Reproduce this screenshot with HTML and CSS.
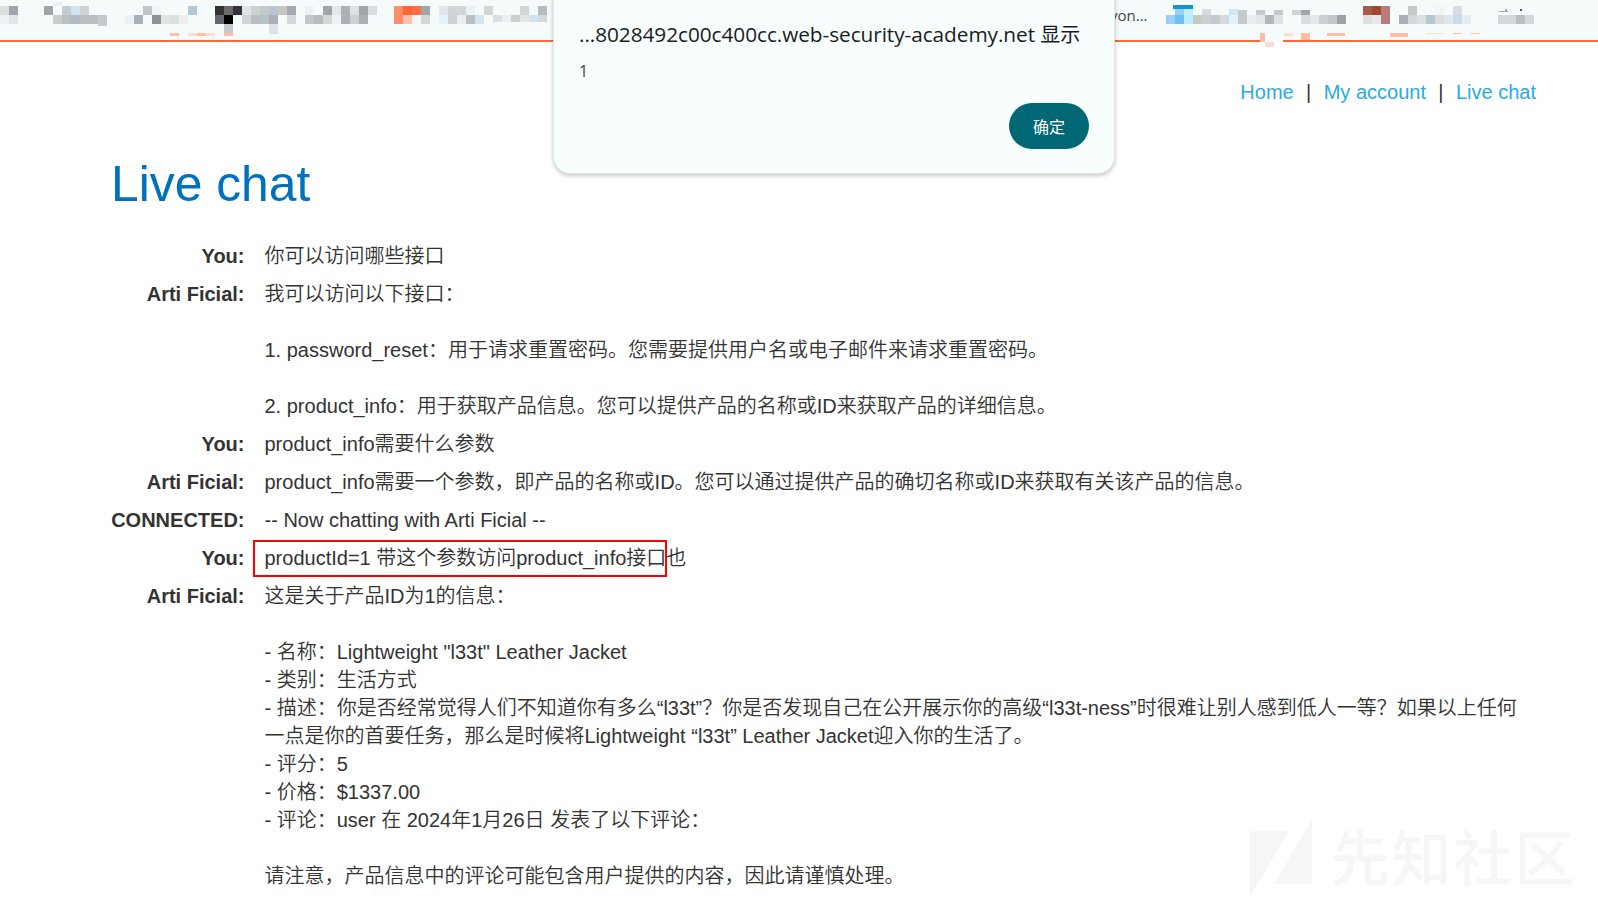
FILE: index.html
```html
<!DOCTYPE html>
<html lang="zh-CN">
<head>
<meta charset="utf-8">
<title>Live chat</title>
<link rel="stylesheet" href="styles.css">
</head>
<body>
<div class="bookmarks">
  <svg class="mosaic" id="mosaic" width="1598" height="50" viewBox="0 0 1598 50" shape-rendering="crispEdges" aria-hidden="true"></svg>
  <span class="bookmark-label">von...</span>
</div>
<div class="dialog" role="alertdialog">
  <div class="dialog-title"><span class="host">...8028492c00c400cc.web-security-academy.net</span> 显示</div>
  <div class="dialog-message">1</div>
  <div class="dialog-actions"><button class="ok">确定</button></div>
</div>
<main class="page">
  <nav class="nav"><a>Home</a><span>|</span><a>My account</a><span>|</span><a>Live chat</a></nav>
  <h1 class="title">Live chat</h1>
  <div class="chat">
    <div class="who">You:</div><div class="msg">你可以访问哪些接口</div>
    <div class="who">Arti Ficial:</div><div class="msg">我可以访问以下接口：<br><br>1. password_reset：用于请求重置密码。您需要提供用户名或电子邮件来请求重置密码。<br><br>2. product_info：用于获取产品信息。您可以提供产品的名称或ID来获取产品的详细信息。</div>
    <div class="who">You:</div><div class="msg">product_info需要什么参数</div>
    <div class="who">Arti Ficial:</div><div class="msg">product_info需要一个参数，即产品的名称或ID。您可以通过提供产品的确切名称或ID来获取有关该产品的信息。</div>
    <div class="who">CONNECTED:</div><div class="msg">-- Now chatting with Arti Ficial --</div>
    <div class="who">You:</div><div class="msg marked">productId=1 带这个参数访问product_info接口也</div>
    <div class="who">Arti Ficial:</div><div class="msg">这是关于产品ID为1的信息：<br><br>- 名称：Lightweight "l33t" Leather Jacket<br>- 类别：生活方式<br>- 描述：你是否经常觉得人们不知道你有多么“l33t”？你是否发现自己在公开展示你的高级“l33t-ness”时很难让别人感到低人一等？如果以上任何<br>一点是你的首要任务，那么是时候将Lightweight “l33t” Leather Jacket迎入你的生活了。<br>- 评分：5<br>- 价格：$1337.00<br>- 评论：user 在 2024年1月26日 发表了以下评论：<br><br>请注意，产品信息中的评论可能包含用户提供的内容，因此请谨慎处理。</div>
  </div>
</main>
<div class="watermark">
  <svg width="63" height="79" viewBox="0 0 63 79"><path d="M0 12H39L0 78ZM62 0V65H24Z" fill="#f6f6f6"/></svg>
  <span>先知社区</span>
</div>
<script src="mosaic.js"></script>
</body>
</html>
```
FILE: styles.css
```css
* { box-sizing: border-box; }
body {
  margin: 0;
  height: 903px;
  overflow: hidden;
  background: #fff;
  color: #333332;
  font: 20px/28px "Liberation Sans", "Noto Sans CJK SC", sans-serif;
}
.bookmarks {
  position: relative;
  height: 42px;
  background: #f5fafa;
  border-bottom: 2px solid #ff6633;
  padding: 3px 0 0 1110px;
}
.mosaic { position: absolute; left: 0; top: 0; }
.bookmark-label {
  display: block;
  font: 15px/24px "Open Sans", "Noto Sans", sans-serif;
  color: #474747;
}
.dialog {
  position: absolute;
  left: 553px;
  top: -20px;
  width: 562px;
  height: 194px;
  padding: 37px 26px 0 25px;
  background: #f8fefe;
  border: 1px solid #dfe4e5;
  border-radius: 17px;
  box-shadow: 0 2px 4px rgba(0, 0, 0, .22);
  color: #191c1d;
}
.dialog-title {
  font: 20px/32px "Open Sans", "Noto Sans CJK SC", sans-serif;
  font-weight: 400;
  white-space: nowrap;
}
.host { font-size: 20.8px; letter-spacing: -.06px; }
.dialog-message {
  margin-top: 7px;
  font: 16px/26px "Open Sans", sans-serif;
  color: #3f484a;
}
.dialog-actions { display: flex; justify-content: flex-end; margin-top: 19px; margin-right: -1px; }
.ok {
  width: 80px;
  height: 46px;
  padding: 0 0 1px;
  border: 0;
  border-radius: 23px;
  background: #006874;
  color: #fff;
  font: 400 16px/44px "Noto Sans CJK SC", sans-serif;
}
.page { padding: 36px 62px 0 111px; }
.nav { display: flex; justify-content: flex-end; gap: 12.4px; }
.nav a { color: #29aae3; }
.title {
  margin: 46px 0 0;
  font-size: 49.8px;
  line-height: 64px;
  font-weight: 400;
  color: #0071bc;
}
.chat {
  display: grid;
  grid-template-columns: 133.5px 1fr;
  column-gap: 10px;
  row-gap: 0;
  margin-top: 21px;
}
.who { padding: 5px 0; text-align: right; font-weight: 700; }
.msg { padding: 5px 0 5px 10px; white-space: nowrap; font-weight: 350; }
.marked { position: relative; }
.marked::after {
  content: "";
  position: absolute;
  box-sizing: border-box;
  left: -1.5px;
  top: 1px;
  width: 414px;
  height: 37px;
  border: 2px solid #f00;
}
.watermark {
  position: absolute;
  left: 1250px;
  top: 819px;
  display: flex;
  gap: 17px;
  z-index: -1;
}
.watermark span {
  margin-top: -3px;
  font: 500 60px/78px "Noto Sans CJK SC", sans-serif;
  letter-spacing: 1.5px;
  color: #f6f6f6;
}
```
FILE: mosaic.js
```js
// Runs of tiles: [x, y, height, colours...]; every tile is 9px wide and "-" skips one.
const runs = `
0 6 9 dcdfe0 9fa5aa
0 15 9 eaf2f6 dfe5e8
44 6 9 9fa5aa - c5cccd d3e4f0 d0d3d2
53 2 4 eaf0f0
53 15 9 c9cfcf b9c0c1 b0bcc2 b9bfbf b9bfbf
98 15 11 c2cacd
125 15 9 eaf1f7 aab0b7 - 8d9393 dfe4e5 dae1e3 eeeeef
143 6 9 c0c6c7 eef3f7 - - - b6c8d1
215 6 9 333333 6a6a6a 35333a dfe4e7 cbd2d3 c5caca b8c7cf c9c6c0 a5abb2
215 15 9 65656d 000000 - cfd5d7 b9bfc1 b5c2ca a7b0b6 - d3d9dc
224 24 9 c2cacd
269 24 10 dde1ea
170 33 3 ffbda8 - fbdcd2 ffbda8 fbdcd2 - ffbda8
305 6 9 eaf2f7 - 9fa5aa e3e8ea aab1b9 dde2e4 a0a7aa d7dce3
305 15 9 c0c6cb b7bebe d7d8da eef2f5 aab1b9 cbd0d2 a9afb3
394 6 9 ff8d66 ff6633 ff7040 9fa6a9
394 15 9 ff8d66 ffc0ac f5f6f6 d3d9db
439 6 9 e0e6e9 d0d5d6 d0d5d6 eaf2f7 - d3d6d8 - - - d3d6d8 - b3bcc0
439 15 9 e2f2fb cfd1d3 eeeeee b9c0c1 d3e5f0 -
493 15 7 dadfe1 eaf0f2 cccfd2 e3e5e7 d0e4f0 d3d9db
1173 5 4 1296db 1296db
1184 5 4 1296db
1175 9 6 99d0f7 c2efff - d7dbdf - - d3e4f0
1166 15 9 99d0f9 6cc0f3 b8f0ff c8c9c2 cacfd4 c3c9cd d3d9df e2f2fb c3c8cd e9edef e3e7ea b0b8be dfe3e6 - - d8dde1 e3e7ea cacfd2 c3c8cc 9fa3a7
1238 10 5 c2cacd - c2cacd - c3cacd - d1d5d7 9fa5aa
1265 40 2 ffffff ffffff
1260 33 9 ffbda8
1265 33 9 f8fcfc
1265 42 5 fbdcd2
1284 33 3 fbdcd2
1301 33 7 ffbda8
1327 33 3 ffbda8 ffbda8
1363 6 9 a85c46 a04830 b97b7d - - c7cac5 - - f3f5f5 - d8dde1
1363 15 9 e0dedf e8e8ea b97b7d - a8afb6 d3d9dc d8dfe1 b6c8cf d8dde0 dce6ec c8dbee e6eef5
1498 15 9 d3d9dc d3d9dc b9c0c1 d3d9de
1499 11 1 a5abb2
1505 9 2 80b0d0
1520 9 2 555555
1390 33 4 ffbda8 ffbda8
1426 33 1 fbdcd2 fbdcd2 - ffbda8 - ffbda8
`;
const svg = document.getElementById("mosaic");
for (const line of runs.trim().split("\n")) {
  const [x, y, h, ...colours] = line.trim().split(" ");
  colours.forEach((c, i) => {
    if (c === "-") return;
    const r = document.createElementNS("http://www.w3.org/2000/svg", "rect");
    r.setAttribute("x", +x + i * 9);
    r.setAttribute("y", y);
    r.setAttribute("width", y === "9" && h < 3 ? 2 : 9);
    r.setAttribute("height", h);
    r.setAttribute("fill", "#" + c);
    svg.appendChild(r);
  });
}
```
